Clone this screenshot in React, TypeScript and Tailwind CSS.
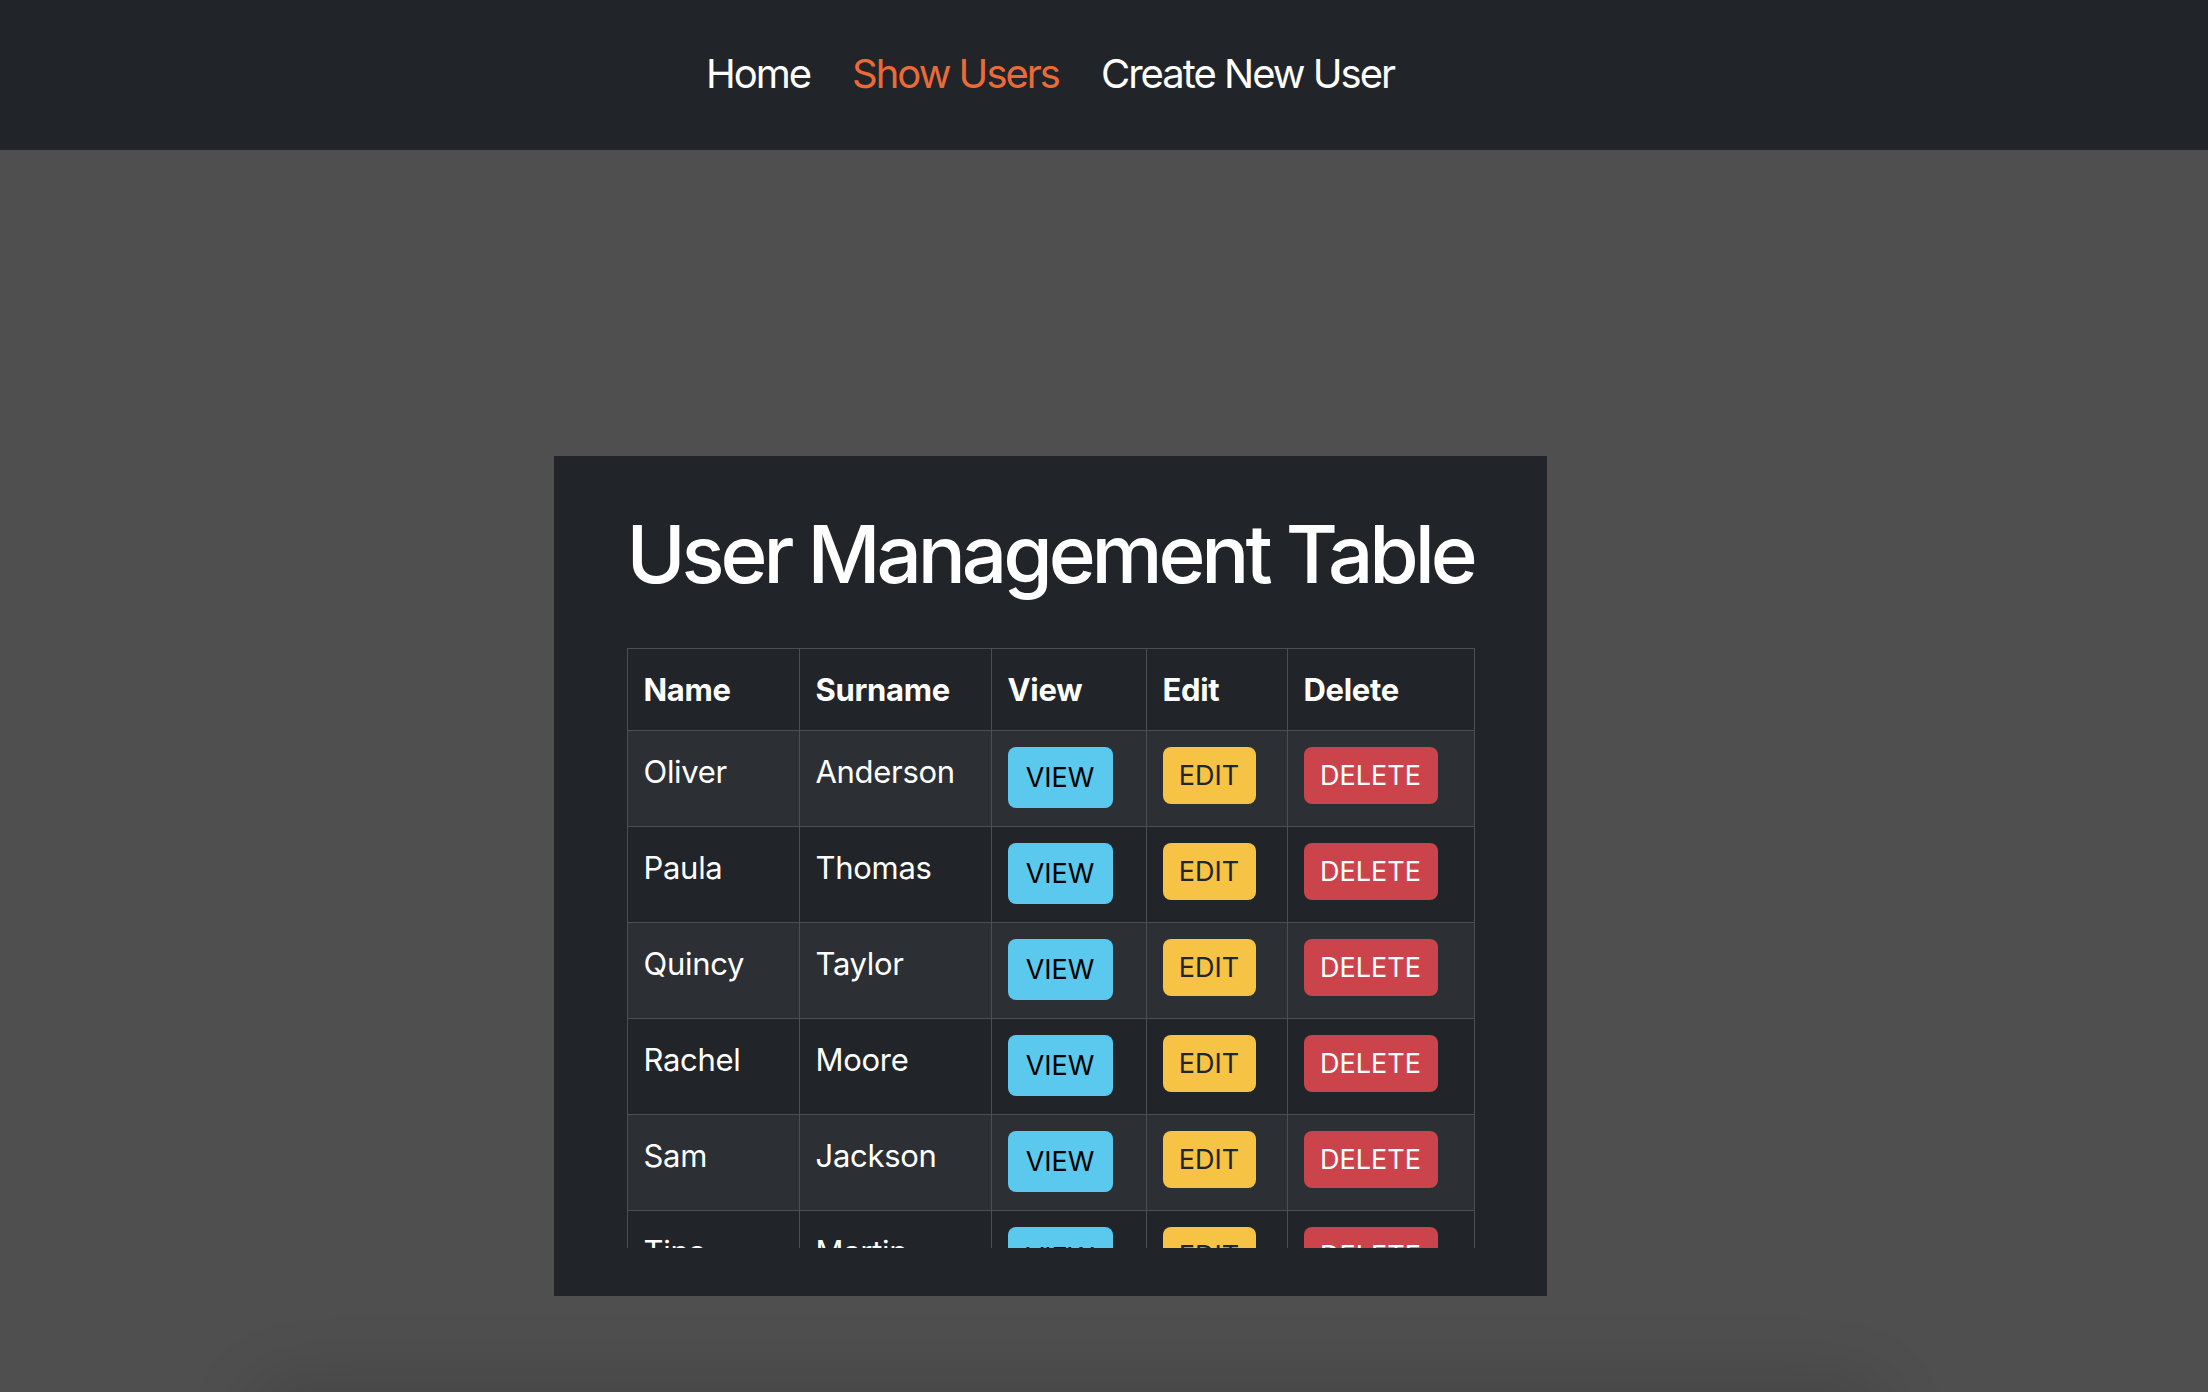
import React from "react";

const users = [
  { name: "Oliver", surname: "Anderson" },
  { name: "Paula", surname: "Thomas" },
  { name: "Quincy", surname: "Taylor" },
  { name: "Rachel", surname: "Moore" },
  { name: "Sam", surname: "Jackson" },
  { name: "Tina", surname: "Martin" },
  { name: "Uma", surname: "Lee" },
];

const cell = "border-r border-b border-[#4b4e52] px-[16px] pt-[16px] align-top";

export default function App() {
  return (
    <div
      className="relative h-screen w-full bg-[#4f4f4f] overflow-hidden"
      style={{ fontFamily: "Inter, 'Noto Sans', sans-serif" }}
    >
      <nav className="h-[150px] bg-[#212529]">
        <div className="w-[2100px] h-full flex items-center justify-center gap-[42px] text-[40px] leading-none tracking-[-2px] pb-[2px]">
          <a className="text-white">Home</a>
          <a className="text-[#ec6a37]">Show Users</a>
          <a className="text-white">Create New User</a>
        </div>
      </nav>

      <div className="w-[2100px] pt-[306px]">
        <div className="mx-auto w-[993px] h-[840px] bg-[#212529] px-[72px] pt-[50px]">
          <h1 className="text-[80px] leading-[96px] font-medium text-white tracking-[-4.1px] whitespace-nowrap mb-[46px] pl-[1px]">
            User Management Table
          </h1>
          <div className="h-[600px] overflow-hidden pl-[1px]">
            <table className="table-fixed w-[848px] border-separate border-spacing-0 border-l border-t border-[#4b4e52] text-[31px] text-white tracking-[-0.3px]">
              <colgroup>
                <col className="w-[172px]" />
                <col className="w-[192px]" />
                <col className="w-[155px]" />
                <col className="w-[141px]" />
                <col className="w-[187px]" />
              </colgroup>
              <thead>
                <tr className="bg-[#212529]">
                  {["Name", "Surname", "View", "Edit", "Delete"].map((h) => (
                    <th key={h} className={`h-[82px] ${cell} text-left font-bold leading-[50px]`}>
                      {h}
                    </th>
                  ))}
                </tr>
              </thead>
              <tbody>
                {users.map((u, i) => (
                  <tr key={u.name} className={i % 2 === 0 ? "bg-[#2c3035]" : "bg-[#212529]"}>
                    <td className={`h-[96px] ${cell} leading-[50px]`}>{u.name}</td>
                    <td className={`h-[96px] ${cell} leading-[50px]`}>{u.surname}</td>
                    <td className={`h-[96px] ${cell}`}>
                      <button className="h-[61px] w-[105px] rounded-[8px] bg-[#5bc8ed] text-[27px] text-black leading-none tracking-normal flex items-center justify-center">
                        VIEW
                      </button>
                    </td>
                    <td className={`h-[96px] ${cell}`}>
                      <button className="h-[57px] w-[93px] rounded-[8px] bg-[#f6c344] text-[27px] text-[#212529] leading-none tracking-normal flex items-center justify-center">
                        EDIT
                      </button>
                    </td>
                    <td className={`h-[96px] ${cell}`}>
                      <button className="h-[57px] w-[134px] rounded-[8px] bg-[#cb444b] text-[27px] text-white leading-none tracking-normal flex items-center justify-center">
                        DELETE
                      </button>
                    </td>
                  </tr>
                ))}
              </tbody>
            </table>
          </div>
        </div>
      </div>

      <div className="pointer-events-none absolute left-[260px] right-[330px] bottom-[-70px] h-[70px] rounded-[40px] shadow-[0_0_70px_10px_rgba(0,0,0,0.14)]" />
    </div>
  );
}
